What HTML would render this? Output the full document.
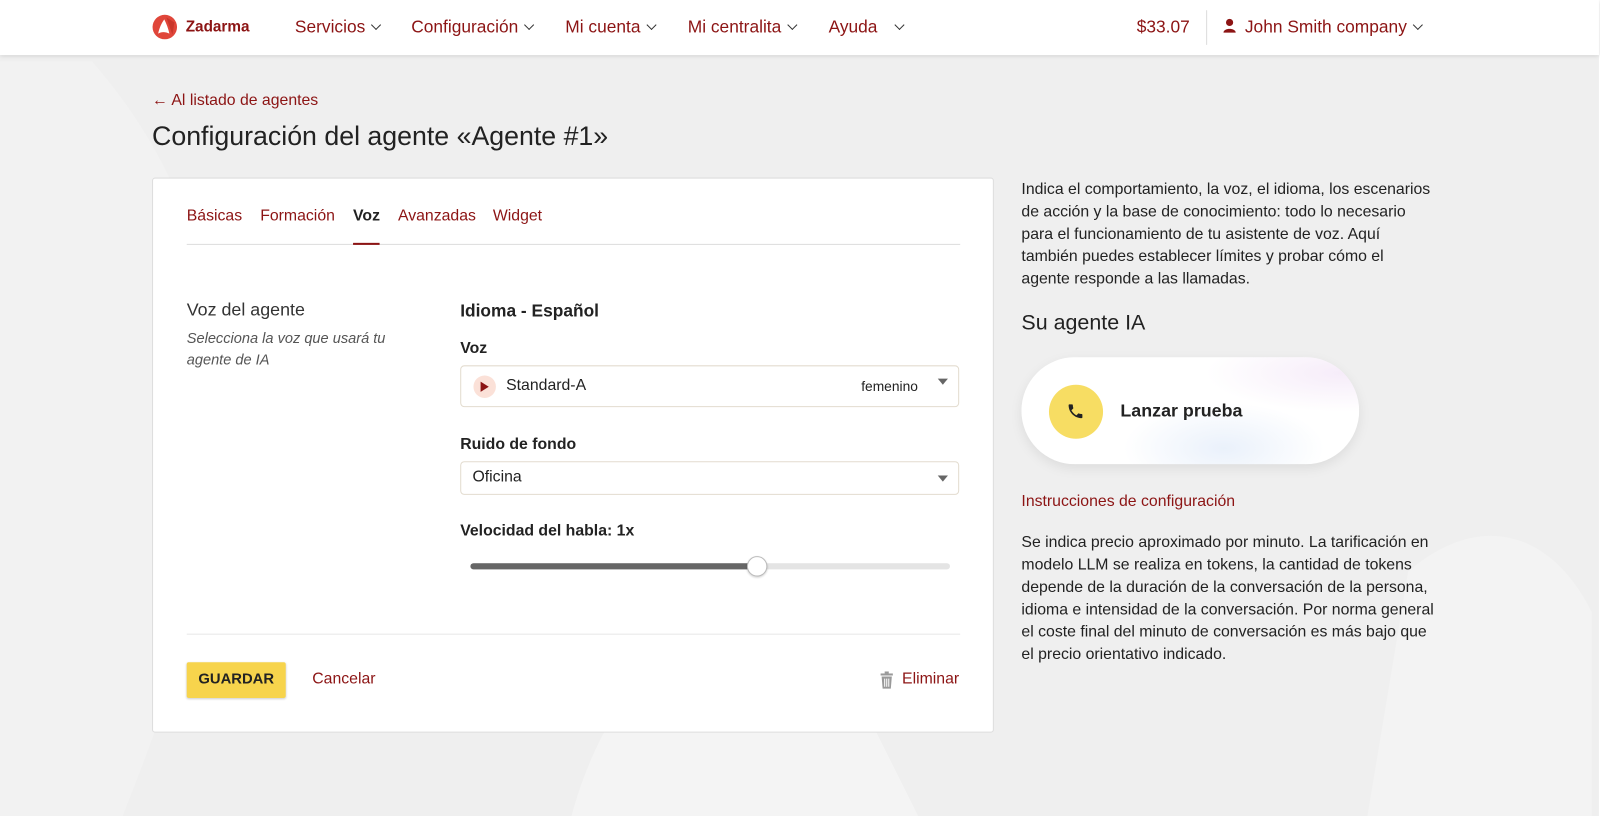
<!DOCTYPE html>
<html><head><meta charset="utf-8"><style>
*{box-sizing:border-box;margin:0;padding:0}
body{width:1600px;height:785px;overflow:hidden;background:#efefef;font-family:"Liberation Sans",Arial,sans-serif;color:#222;position:relative}
#w{position:absolute;left:0;top:0;width:1568px;height:770px;transform:scale(1.0204);transform-origin:0 0}
.red{color:#8c1414}
.hdr{position:absolute;left:0;top:0;width:1567px;height:54px;background:#fff;box-shadow:0 1px 4px rgba(0,0,0,.15);z-index:2}
.hdr span{position:absolute;top:17px;font-size:17px;color:#8c1414}
.chev{display:inline-block;width:7px;height:7px;border-right:1.6px solid #333;border-bottom:1.6px solid #333;transform:rotate(45deg);margin-left:7px;position:relative;top:-4px}
.card{position:absolute;left:149px;top:174px;width:825px;height:544px;background:#fff;border:1px solid #ddd;border-radius:3px}
.abs{position:absolute}
.sel{position:absolute;left:451px;width:489px;background:#fff;border:1px solid #e3dccf;border-radius:4px}
.tri{position:absolute;right:10px;width:0;height:0;border-left:5px solid transparent;border-right:5px solid transparent;border-top:6px solid #666}
.side{font-size:15.5px;line-height:22px;color:#222}
.t{font-size:15.5px}
</style></head><body>
<div id="w">
<svg class="abs" style="left:0;top:0" width="1568" height="800"><path d="M560 800 C600 650 700 600 760 520 L900 800Z" fill="#f4f4f4"/><path d="M1380 560 C1450 500 1520 520 1560 600 L1560 800 L1340 800Z" fill="#f3f3f3"/><path d="M90 60 C300 300 200 600 120 800 L0 800 L0 60Z" fill="#f2f2f2"/></svg>
<div class="abs" style="left:1567px;top:0;width:3px;height:800px;background:#fff"></div>
<div class="hdr">
<svg class="abs" style="left:149px;top:14px" width="25" height="25" viewBox="0 0 25 25"><circle cx="12.5" cy="12.5" r="12" fill="#e0463a"/><path d="M12 5 C9 9 7 14 6 19 C9 17 13 17 17 19 C16 14 14 9 12 5Z" fill="#fff"/><path d="M14 3 L22 8 L20 20" fill="#c9362b"/></svg>
<span style="left:182px;top:18px;font-size:15px;font-weight:bold;color:#8c1414">Zadarma</span>
<span style="left:289px">Servicios<i class="chev"></i></span>
<span style="left:403px">Configuración<i class="chev"></i></span>
<span style="left:554px">Mi cuenta<i class="chev"></i></span>
<span style="left:674px">Mi centralita<i class="chev"></i></span>
<span style="left:812px">Ayuda<i class="chev" style="margin-left:18px"></i></span>
<span style="left:1114px">$33.07</span>
<div class="abs" style="left:1182px;top:10px;width:1px;height:34px;background:#ddd"></div>
<svg class="abs" style="left:1198px;top:18px" width="14" height="15" viewBox="0 0 14 15"><circle cx="7" cy="4" r="3.5" fill="#8c1414"/><path d="M1 14 C1 9 13 9 13 14Z" fill="#8c1414"/></svg>
<span style="left:1220px">John Smith company<i class="chev"></i></span>
</div>
<div class="abs red t" style="left:149px;top:90px">← Al listado de agentes</div>
<div class="abs" style="left:149px;top:118px;font-size:26.2px;color:#222">Configuración del agente «Agente #1»</div>
<div class="card">
<div class="abs red t" style="left:33px;top:28px">Básicas</div>
<div class="abs red t" style="left:105px;top:28px">Formación</div>
<div class="abs t" style="left:196px;top:28px;font-weight:bold;color:#222">Voz</div>
<div class="abs red t" style="left:240px;top:28px">Avanzadas</div>
<div class="abs red t" style="left:333px;top:28px">Widget</div>
<div class="abs" style="left:33px;top:64px;width:758px;height:1px;background:#ddd"></div>
<div class="abs" style="left:196px;top:63px;width:26px;height:2px;background:#8c1414"></div>
<div class="abs" style="left:33px;top:118px;font-size:17.5px;color:#333">Voz del agente</div>
<div class="abs" style="left:33px;top:147px;font-size:14.3px;line-height:21px;font-style:italic;color:#555;width:230px">Selecciona la voz que usará tu<br>agente de IA</div>
<div class="abs" style="left:301px;top:120px;font-size:17px;font-weight:bold">Idioma - Español</div>
<div class="abs t" style="left:301px;top:158px;font-weight:bold">Voz</div>
<div class="abs t" style="left:301px;top:252px;font-weight:bold">Ruido de fondo</div>
<div class="abs t" style="left:301px;top:337px;font-weight:bold">Velocidad del habla: 1x</div>
<div class="abs" style="left:311px;top:377px;width:470px;height:6px;border-radius:3px;background:#e4e4e4"></div>
<div class="abs" style="left:311px;top:377px;width:282px;height:6px;border-radius:3px;background:#666"></div>
<div class="abs" style="left:582px;top:370px;width:20px;height:20px;border-radius:50%;background:#fff;border:1px solid #bbb;box-shadow:0 1px 2px rgba(0,0,0,.2)"></div>
<div class="abs" style="left:33px;top:446px;width:758px;height:1px;background:#e8e8e8"></div>
<div class="abs" style="left:33px;top:474px;width:97px;height:35px;background:#f7d44c;border-radius:2px;box-shadow:0 1px 2px rgba(0,0,0,.2);font-size:14.5px;font-weight:bold;color:#222;text-align:center;line-height:35px">GUARDAR</div>
<div class="abs red t" style="left:156px;top:482px">Cancelar</div>
<svg class="abs" style="left:712px;top:483px" width="14" height="17" viewBox="0 0 14 17"><rect x="1" y="2" width="12" height="2" fill="#999"/><rect x="5" y="0" width="4" height="2" fill="#999"/><path d="M2 5 H12 L11 17 H3Z" fill="#999"/><path d="M5 7V15M7 7V15M9 7V15" stroke="#fff" stroke-width="1"/></svg>
<div class="abs red t" style="left:734px;top:482px">Eliminar</div>
</div>
<div class="sel" style="top:358px;height:41px"><div class="abs" style="left:12px;top:9px;width:22px;height:22px;border-radius:50%;background:#fbe1d8"></div><div class="abs" style="left:19px;top:15px;border-top:5px solid transparent;border-bottom:5px solid transparent;border-left:8px solid #8c1414"></div><div class="abs t" style="left:44px;top:10px">Standard-A</div><div class="abs" style="left:392px;top:12px;font-size:13.5px">femenino</div><div class="tri" style="top:12px"></div></div>
<div class="sel" style="top:452px;height:33px"><div class="abs t" style="left:11px;top:6px">Oficina</div><div class="tri" style="top:13px"></div></div>
<div class="abs side" style="left:1001px;top:175px;width:403px">Indica el comportamiento, la voz, el idioma, los escenarios de acción y la base de conocimiento: todo lo necesario para el funcionamiento de tu asistente de voz. Aquí también puedes establecer límites y probar cómo el agente responde a las llamadas.</div>
<div class="abs" style="left:1001px;top:305px;font-size:21px;color:#222">Su agente IA</div>
<div class="abs" style="left:1001px;top:350px;width:331px;height:105px;border-radius:53px;background:radial-gradient(ellipse at 60% 85%,#eaf1fb 0,rgba(255,255,255,0) 35%),radial-gradient(ellipse at 95% 15%,#f6ecf9 0,rgba(255,255,255,0) 30%),#fff;box-shadow:0 4px 12px rgba(0,0,0,.08)"></div>
<div class="abs" style="left:1028px;top:377px;width:53px;height:53px;border-radius:50%;background:#f7dd63"></div>
<svg class="abs" style="left:1045px;top:394px" width="18" height="18" viewBox="0 0 24 24"><path d="M6.6 10.8c1.4 2.8 3.8 5.1 6.6 6.6l2.2-2.2c.3-.3.7-.4 1-.2 1.1.4 2.3.6 3.6.6.6 0 1 .4 1 1V20c0 .6-.4 1-1 1C10.6 21 3 13.4 3 4c0-.6.4-1 1-1h3.5c.6 0 1 .4 1 1 0 1.3.2 2.5.6 3.6.1.3 0 .7-.2 1z" fill="#222"/></svg>
<div class="abs" style="left:1098px;top:392px;font-size:17.5px;font-weight:bold;color:#222">Lanzar prueba</div>
<div class="abs red t" style="left:1001px;top:483px">Instrucciones de configuración</div>
<div class="abs side" style="left:1001px;top:521px;width:412px">Se indica precio aproximado por minuto. La tarificación en modelo LLM se realiza en tokens, la cantidad de tokens depende de la duración de la conversación de la persona, idioma e intensidad de la conversación. Por norma general el coste final del minuto de conversación es más bajo que el precio orientativo indicado.</div>
</div>
</body></html>
